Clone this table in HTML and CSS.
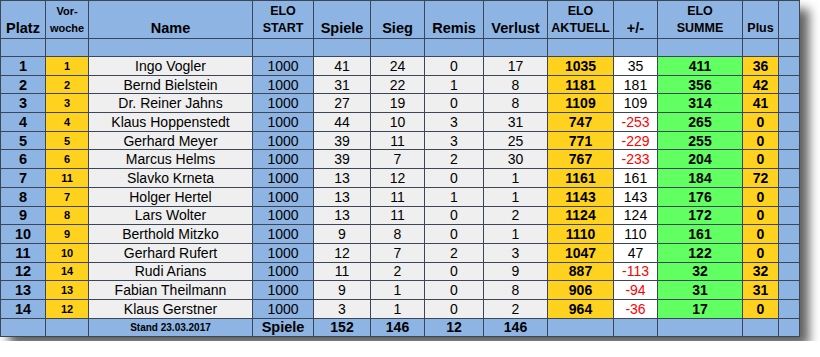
FILE: index.html
```html
<!DOCTYPE html>
<html lang="de">
<head>
<meta charset="utf-8">
<title>ELO Tabelle</title>
<link rel="stylesheet" href="styles.css">
</head>
<body>
<div class="sheet">
<table class="elo">
<colgroup>
<col class="c-platz"><col class="c-vor"><col class="c-name"><col class="c-start"><col class="c-spiele"><col class="c-sieg"><col class="c-remis"><col class="c-verlust"><col class="c-akt"><col class="c-diff"><col class="c-summe"><col class="c-plus"><col class="c-empty">
</colgroup>
<thead>
<tr class="head">
<th class="big">Platz</th>
<th class="small">Vor-<br>woche</th>
<th class="big">Name</th>
<th class="elohd">ELO<br>START</th>
<th class="big">Spiele</th>
<th class="big">Sieg</th>
<th class="big">Remis</th>
<th class="big">Verlust</th>
<th class="elohd">ELO<br>AKTUELL</th>
<th class="big">+/-</th>
<th class="elohd">ELO<br>SUMME</th>
<th class="med">Plus</th>
<th></th>
</tr>
<tr class="spacer"><td></td><td></td><td></td><td></td><td></td><td></td><td></td><td></td><td></td><td></td><td></td><td></td><td></td></tr>
</thead>
<tbody>
<tr><td class="platz">1</td><td class="vor">1</td><td class="grey">Ingo Vogler</td><td class="start">1000</td><td class="grey">41</td><td class="grey">24</td><td class="grey">0</td><td class="grey">17</td><td class="akt">1035</td><td class="diff">35</td><td class="summe">411</td><td class="plus">36</td><td class="blank"></td></tr>
<tr><td class="platz">2</td><td class="vor">2</td><td class="grey">Bernd Bielstein</td><td class="start">1000</td><td class="grey">31</td><td class="grey">22</td><td class="grey">1</td><td class="grey">8</td><td class="akt">1181</td><td class="diff">181</td><td class="summe">356</td><td class="plus">42</td><td class="blank"></td></tr>
<tr><td class="platz">3</td><td class="vor">3</td><td class="grey">Dr. Reiner Jahns</td><td class="start">1000</td><td class="grey">27</td><td class="grey">19</td><td class="grey">0</td><td class="grey">8</td><td class="akt">1109</td><td class="diff">109</td><td class="summe">314</td><td class="plus">41</td><td class="blank"></td></tr>
<tr><td class="platz">4</td><td class="vor">4</td><td class="grey">Klaus Hoppenstedt</td><td class="start">1000</td><td class="grey">44</td><td class="grey">10</td><td class="grey">3</td><td class="grey">31</td><td class="akt">747</td><td class="diff neg">-253</td><td class="summe">265</td><td class="plus">0</td><td class="blank"></td></tr>
<tr><td class="platz">5</td><td class="vor">5</td><td class="grey">Gerhard Meyer</td><td class="start">1000</td><td class="grey">39</td><td class="grey">11</td><td class="grey">3</td><td class="grey">25</td><td class="akt">771</td><td class="diff neg">-229</td><td class="summe">255</td><td class="plus">0</td><td class="blank"></td></tr>
<tr><td class="platz">6</td><td class="vor">6</td><td class="grey">Marcus Helms</td><td class="start">1000</td><td class="grey">39</td><td class="grey">7</td><td class="grey">2</td><td class="grey">30</td><td class="akt">767</td><td class="diff neg">-233</td><td class="summe">204</td><td class="plus">0</td><td class="blank"></td></tr>
<tr><td class="platz">7</td><td class="vor">11</td><td class="grey">Slavko Krneta</td><td class="start">1000</td><td class="grey">13</td><td class="grey">12</td><td class="grey">0</td><td class="grey">1</td><td class="akt">1161</td><td class="diff">161</td><td class="summe">184</td><td class="plus">72</td><td class="blank"></td></tr>
<tr><td class="platz">8</td><td class="vor">7</td><td class="grey">Holger Hertel</td><td class="start">1000</td><td class="grey">13</td><td class="grey">11</td><td class="grey">1</td><td class="grey">1</td><td class="akt">1143</td><td class="diff">143</td><td class="summe">176</td><td class="plus">0</td><td class="blank"></td></tr>
<tr><td class="platz">9</td><td class="vor">8</td><td class="grey">Lars Wolter</td><td class="start">1000</td><td class="grey">13</td><td class="grey">11</td><td class="grey">0</td><td class="grey">2</td><td class="akt">1124</td><td class="diff">124</td><td class="summe">172</td><td class="plus">0</td><td class="blank"></td></tr>
<tr><td class="platz">10</td><td class="vor">9</td><td class="grey">Berthold Mitzko</td><td class="start">1000</td><td class="grey">9</td><td class="grey">8</td><td class="grey">0</td><td class="grey">1</td><td class="akt">1110</td><td class="diff">110</td><td class="summe">161</td><td class="plus">0</td><td class="blank"></td></tr>
<tr><td class="platz">11</td><td class="vor">10</td><td class="grey">Gerhard Rufert</td><td class="start">1000</td><td class="grey">12</td><td class="grey">7</td><td class="grey">2</td><td class="grey">3</td><td class="akt">1047</td><td class="diff">47</td><td class="summe">122</td><td class="plus">0</td><td class="blank"></td></tr>
<tr><td class="platz">12</td><td class="vor">14</td><td class="grey">Rudi Arians</td><td class="start">1000</td><td class="grey">11</td><td class="grey">2</td><td class="grey">0</td><td class="grey">9</td><td class="akt">887</td><td class="diff neg">-113</td><td class="summe">32</td><td class="plus">32</td><td class="blank"></td></tr>
<tr><td class="platz">13</td><td class="vor">13</td><td class="grey">Fabian Theilmann</td><td class="start">1000</td><td class="grey">9</td><td class="grey">1</td><td class="grey">0</td><td class="grey">8</td><td class="akt">906</td><td class="diff neg">-94</td><td class="summe">31</td><td class="plus">31</td><td class="blank"></td></tr>
<tr><td class="platz">14</td><td class="vor">12</td><td class="grey">Klaus Gerstner</td><td class="start">1000</td><td class="grey">3</td><td class="grey">1</td><td class="grey">0</td><td class="grey">2</td><td class="akt">964</td><td class="diff neg">-36</td><td class="summe">17</td><td class="plus">0</td><td class="blank"></td></tr>
</tbody>
<tfoot>
<tr class="foot"><td></td><td></td><td class="stand">Stand 23.03.2017</td><td class="fbig">Spiele</td><td class="fnum">152</td><td class="fnum">146</td><td class="fnum">12</td><td class="fnum">146</td><td></td><td></td><td></td><td></td><td></td></tr>
</tfoot>
</table>
</div>
</body>
</html>
```
FILE: styles.css
```css
html, body {
  margin: 0;
  padding: 0;
  background: #ffffff;
}
body {
  font-family: "Liberation Sans", Arial, sans-serif;
  color: #000;
}
.sheet {
  display: inline-block;
  box-shadow: 9px 9px 10px rgba(0, 0, 0, 0.62);
  line-height: 0;
}
.elo {
  border-collapse: collapse;
  table-layout: fixed;
  width: 800px;
  border: 1px solid #1a1a1a;
  background: #8db4e2;
  line-height: normal;
}
.c-platz { width: 45px; }
.c-vor { width: 43px; }
.c-name { width: 164px; }
.c-start { width: 61px; }
.c-spiele { width: 57px; }
.c-sieg { width: 54px; }
.c-remis { width: 59px; }
.c-verlust { width: 64px; }
.c-akt { width: 66px; }
.c-diff { width: 44px; }
.c-summe { width: 85px; }
.c-plus { width: 36px; }
.c-empty { width: 21px; }

.elo th, .elo td {
  border: 1px solid #3c4656;
  padding: 0;
  text-align: center;
  overflow: hidden;
  white-space: nowrap;
}
.head th {
  height: 36px;
  vertical-align: bottom;
  font-weight: bold;
  padding-bottom: 1px;
}
.head .big { font-size: 14.5px; line-height: 17px; }
.head .med { font-size: 12.5px; line-height: 17px; }
.head .small { font-size: 11px; line-height: 17px; }
.head .elohd { font-size: 12.5px; line-height: 17px; }
.spacer td { height: 17px; }

tbody td {
  height: 17.7px;
  font-size: 14px;
  line-height: 16px;
  vertical-align: middle;
}
tbody tr td { border-color: #4a4a4a; }
.platz { font-weight: bold; background: #8db4e2; font-size: 14.5px; }
.vor { background: #ffd21f; font-weight: bold; font-size: 11px; }
.grey { background: #efefef; }
.start { background: #8db4e2; }
.akt { background: #ffd21f; font-weight: bold; }
.diff { background: #ffffff; }
.neg { color: #ff0000; }
.summe { background: #62ff62; font-weight: bold; }
.plus { background: #ffd21f; font-weight: bold; }
.blank { background: #8db4e2; }

.foot td {
  height: 17px;
  font-weight: bold;
  vertical-align: middle;
}
.foot .stand { font-size: 10px; }
.foot .fbig { font-size: 14.5px; }
.foot .fnum { font-size: 14px; }
```
